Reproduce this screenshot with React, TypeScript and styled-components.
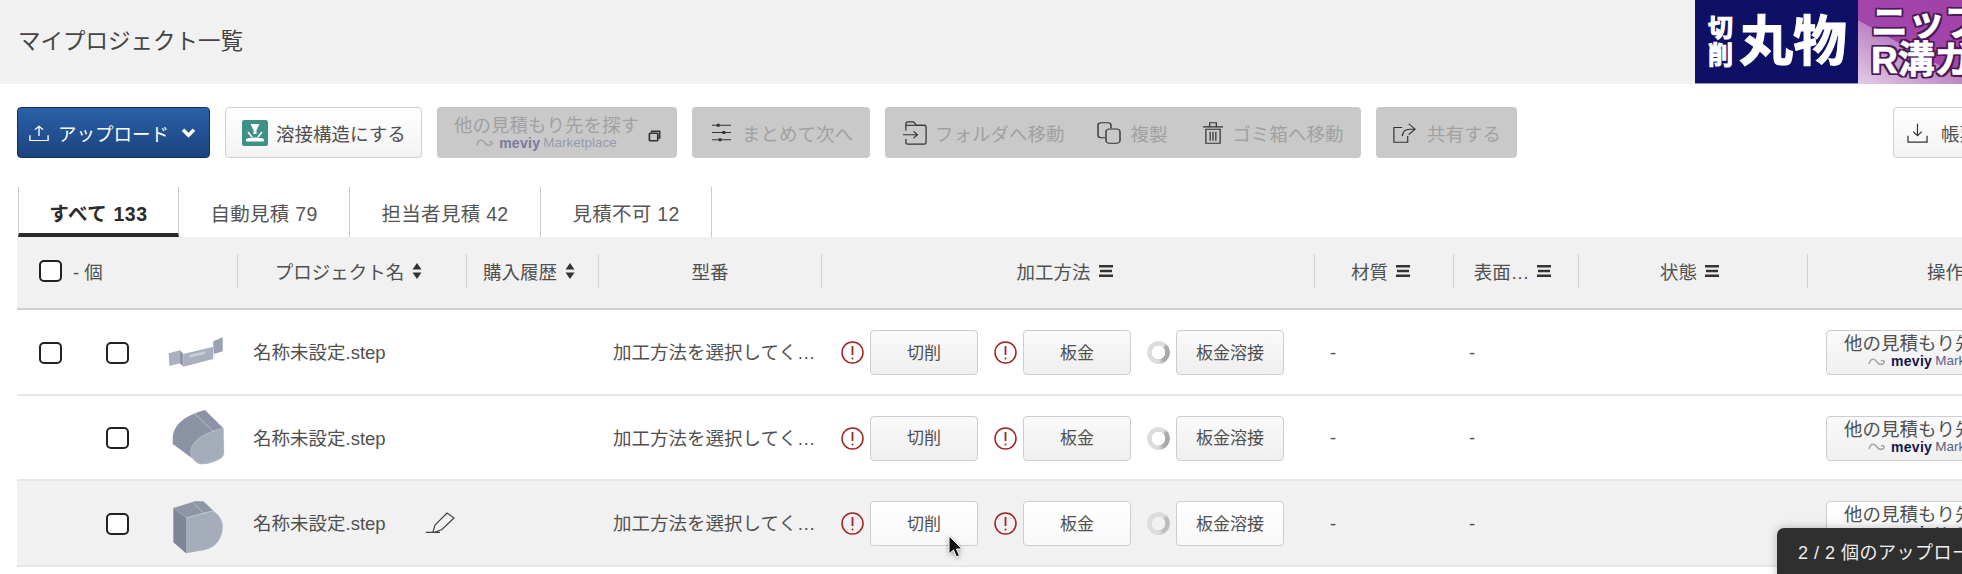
import * as React from 'react';
import styled, { createGlobalStyle } from 'styled-components';

const GlobalStyle = createGlobalStyle`
    html, body {
        margin: 0;
        padding: 0;
        background: #fff;
    }
    body {
        font-family: "Liberation Sans", "Noto Sans CJK JP", sans-serif;
        font-size: 18.5px;
        color: #505050;
    }
`;

const Page = styled.div`
    position: relative;
    width: 1962px;
    height: 574px;
    overflow: hidden;
`;

const Header = styled.header`
    display: flex;
    align-items: center;
    height: 84px;
    padding-left: 18px;
    background: #f1f1f2;
`;

const Title = styled.h1`
    margin: 0 0 6px;
    font-size: 22.5px;
    font-weight: 400;
    color: #444;
`;

const Banner = styled.div`
    display: flex;
    width: 267px;
    height: 84px;
    margin-left: auto;
    overflow: hidden;
    font-weight: 700;
    color: #fff;
`;

const BannerNavy = styled.div`
    display: flex;
    align-items: center;
    gap: 5px;
    flex: 0 0 163px;
    padding-left: 13px;
    box-sizing: border-box;
    background: #0d1064;
    border-bottom: 1px solid #8f90c8;
    -webkit-text-stroke: 1px #fff;
`;

const BannerSmall = styled.span`
    display: block;
    width: 26px;
    font-size: 25px;
    line-height: 27px;
`;

const BannerLarge = styled.span`
    font-size: 54px;
    line-height: 60px;
    white-space: nowrap;
`;

const BannerPurple = styled.div`
    flex: 1;
    padding: 5px 0 0 13px;
    background: linear-gradient(209deg, #a040a8 0%, #a346aa 58%, #bd83c4 58.5%, #e2cce6 100%);
    font-size: 37px;
    line-height: 37px;
    white-space: nowrap;
    -webkit-text-stroke: 0.6px #fff;
    text-shadow: 2px 0 #4a1a58, -2px 0 #4a1a58, 0 2px #4a1a58, 0 -2px #4a1a58, 2px 2px #4a1a58, -2px 2px #4a1a58,
        2px -2px #4a1a58, -2px -2px #4a1a58;
`;

const Toolbar = styled.div`
    display: flex;
    gap: 15px;
    padding: 23px 0 0 17px;
`;

const Button = styled.button<{ $width: number }>`
    display: flex;
    align-items: center;
    flex: 0 0 ${p => p.$width}px;
    box-sizing: border-box;
    width: ${p => p.$width}px;
    height: 51px;
    padding: 0;
    border: 1px solid #cfcfcf;
    border-radius: 4px;
    background: linear-gradient(#fff, #f3f3f3);
    font: inherit;
    color: #505050;
    white-space: nowrap;
`;

const UploadButton = styled(Button)`
    padding-left: 11px;
    gap: 9px;
    border-color: #14305c;
    background: linear-gradient(#2b60a8, #1b437f);
    color: #fff;
`;

const WeldButton = styled(Button)`
    padding-left: 16px;
    gap: 8px;
`;

const DisabledButton = styled(Button)<{ $left?: number }>`
    padding-left: ${p => p.$left ?? 18}px;
    gap: 11px;
    border: 0;
    background: #c9c9c9;
    color: #a1a1a1;
`;

const GroupItem = styled.span<{ $gap: number; $iconGap: number }>`
    display: flex;
    align-items: center;
    gap: ${p => p.$iconGap}px;
    margin-right: ${p => p.$gap}px;
`;

const ExportButton = styled(Button)`
    margin-left: 361px;
    padding-left: 13px;
    gap: 13px;
`;

const SearchStack = styled.span`
    display: flex;
    flex-direction: column;
    align-items: center;
    line-height: 20px;
`;

const MarketLine = styled.span<{ $disabled?: boolean }>`
    display: flex;
    align-items: center;
    gap: 3px;
    font-size: 13.5px;
    line-height: 14px;
    color: ${p => (p.$disabled ? '#979bae' : '#5b6285')};

    b {
        font-weight: 700;
        font-size: 14px;
        letter-spacing: 0.3px;
        color: ${p => (p.$disabled ? '#7a7a9c' : '#14164a')};
    }
`;

const Tabs = styled.div`
    display: flex;
    height: 50px;
    margin: 29px 0 0 18px;
`;

const Tab = styled.div<{ $active?: boolean; $width: number }>`
    display: flex;
    align-items: center;
    justify-content: center;
    box-sizing: border-box;
    width: ${p => p.$width}px;
    border-right: 1px solid #ccc;
    border-left: ${p => (p.$active ? '1px solid #ccc' : '0')};
    border-bottom: ${p => (p.$active ? '4px solid #2b2b2b' : '0')};
    padding-top: ${p => (p.$active ? '4px' : '0')};
    font-size: 19.5px;
    letter-spacing: ${p => (p.$active ? '0.6px' : '0.3px')};
    font-weight: ${p => (p.$active ? 700 : 400)};
    color: ${p => (p.$active ? '#2b2b2b' : '#555')};
`;

const columns = '221px 229px 132px 223px 493px 139px 125px 229px 275px';

const HeadRow = styled.div`
    display: grid;
    grid-template-columns: ${columns};
    align-items: center;
    height: 73px;
    padding-bottom: 3px;
    margin-left: 17px;
    background: #f1f1f1;
    border-bottom: 2px solid #d0d0d0;
    box-sizing: border-box;
`;

const HeadCell = styled.div<{ $last?: boolean }>`
    display: flex;
    align-items: center;
    justify-content: center;
    gap: 8px;
    box-sizing: border-box;
    height: 34px;
    border-right: ${p => (p.$last ? '0' : '1px solid #d2d2d2')};
    white-space: nowrap;
    color: #505050;

    &:has(svg) {
        padding-right: 7px;
    }
`;

const SelectHead = styled(HeadCell)`
    justify-content: flex-start;
    gap: 11px;
    padding-left: 22px;
`;

const Row = styled.div<{ $hover?: boolean }>`
    display: grid;
    grid-template-columns: ${columns};
    align-items: center;
    box-sizing: border-box;
    height: 85.6px;
    padding-top: 2px;
    margin-left: 17px;
    background: ${p => (p.$hover ? '#f1f1f1' : '#fff')};
    border-bottom: 2px solid #e6e6e6;
`;

const SelectCell = styled.div`
    display: grid;
    grid-template-columns: 67px 58px 1fr;
    align-items: center;
    padding-left: 22px;
`;

const Check = styled.span`
    display: block;
    box-sizing: border-box;
    width: 23px;
    height: 22px;
    border: 2px solid #222;
    border-radius: 5px;
    background: #fff;
`;

const NameCell = styled.div`
    display: flex;
    align-items: center;
    gap: 40px;
    padding-left: 15px;
    margin-bottom: 3px;
`;

const ModelCell = styled.div`
    width: 205px;
    margin: 0 0 3px 14px;
    overflow: hidden;
    text-overflow: ellipsis;
    white-space: nowrap;
`;

const ProcessCell = styled.div`
    display: flex;
    align-items: center;
    padding-left: 19px;
`;

const ProcessItem = styled.div`
    display: flex;
    align-items: center;
    gap: 6px;
    margin-right: 16px;
`;

const ProcessButton = styled.button<{ $hover?: boolean }>`
    box-sizing: border-box;
    width: 108px;
    height: 45px;
    padding: 0 0 3px;
    border: 1px solid #cdcdcd;
    border-radius: 4px;
    background: ${p => (p.$hover ? 'linear-gradient(#fff, #f8f8f8)' : 'linear-gradient(#fafafa, #efefef)')};
    font: inherit;
    font-size: 17px;
    color: #505050;
`;

const Spinner = styled.span<{ $soft?: boolean }>`
    display: block;
    box-sizing: border-box;
    width: 23px;
    height: 23px;
    border-radius: 50%;
    background: conic-gradient(#dcdcdc 0 10%, ${p => (p.$soft ? '#bdbdbd' : '#a9a9a9')} 15% 40%, #dcdcdc 50% 100%);
    -webkit-mask: radial-gradient(circle, transparent 6.5px, #000 7px);
    mask: radial-gradient(circle, transparent 6.5px, #000 7px);
`;

const DashCell = styled.div`
    padding-left: 15px;
`;

const OpsCell = styled.div`
    padding-left: 18px;
`;

const MarketButton = styled.button<{ $hover?: boolean }>`
    display: flex;
    flex-direction: column;
    align-items: flex-start;
    box-sizing: border-box;
    width: 240px;
    height: 45px;
    padding: 2px 0 0 17px;
    border: 1px solid #cdcdcd;
    border-radius: 4px;
    background: ${p => (p.$hover ? 'linear-gradient(#fff, #f8f8f8)' : 'linear-gradient(#fafafa, #f0f0f0)')};
    font: inherit;
    line-height: 21px;
    color: #505050;
    white-space: nowrap;
`;

const MarketSub = styled(MarketLine)`
    margin-left: 24px;
`;

const Toast = styled.div`
    position: absolute;
    left: 1777px;
    top: 528px;
    width: 300px;
    height: 70px;
    padding: 10px 0 0 21px;
    border-radius: 7px;
    background: #2f2f2f;
    box-shadow: 0 0 10px rgba(0, 0, 0, 0.25);
    font-size: 18px;
    color: #eee;
    letter-spacing: 0.5px;
    white-space: nowrap;
`;

const Cursor = styled.svg`
    position: absolute;
    left: 948px;
    top: 535px;
    filter: drop-shadow(0 1px 2px rgba(0, 0, 0, 0.35));
`;

const UploadIcon = () => (
    <svg width="20" height="18" viewBox="0 0 22 24" preserveAspectRatio="none" fill="none" stroke="#fff" strokeWidth="1.500">
        <path d="M11 16V3M6.500 7.500 11 3l4.500 4.500M1 15v7h20v-7" />
    </svg>
);

const ChevronIcon = () => (
    <svg width="17" height="11" viewBox="0 0 16 12" fill="none" stroke="#fff" strokeWidth="3.800" style={{ marginLeft: 2 }}>
        <path d="M2 3l6 6 6-6" />
    </svg>
);

const WeldIcon = () => (
    <svg width="26" height="26" viewBox="0 0 26 26">
        <rect width="26" height="26" rx="2.500" fill="#3f9086" />
        <path d="M8.500 4h9l-3 6v4h-3v-4z" fill="#fff" />
        <path d="M6 12l4 5M20 12l-4 5" stroke="#fff" strokeWidth="1.500" />
        <path d="M4 19c5-2 13-2 18 0v2.500H4z" fill="#fff" />
    </svg>
);

const ExternalIcon = () => (
    <svg width="13" height="12" viewBox="0 0 14 15" preserveAspectRatio="none" fill="none" stroke="#333" strokeWidth="1.800" style={{ marginLeft: -2, marginTop: 6 }}>
        <path d="M4 3V1.500h8.500V10H11" />
        <rect x="1.500" y="4" width="9" height="9.500" rx="1" />
    </svg>
);

const SlidersIcon = () => (
    <svg width="19" height="21" viewBox="0 0 20 26" preserveAspectRatio="none" fill="none" stroke="#333" strokeWidth="1.200">
        <path d="M0 4h20M0 13h20M0 22h20" />
        <path d="M5 4h3M11 13h3M7 22h3" strokeWidth="3.500" />
    </svg>
);

const FolderIcon = () => (
    <svg width="25" height="24" viewBox="0 0 26 28" preserveAspectRatio="none" fill="none" stroke="#333" strokeWidth="1.300">
        <path d="M3 11V3.500Q3 1 5 1h6l3 4h8q2 0 2 2.500v17q0 2.500-2 2.500H5q-2 0-2-2.500V21" />
        <path d="M3 5h21" />
        <path d="M0 16h15M11 12l4 4-4 4" />
    </svg>
);

const CopyIcon = () => (
    <svg width="24" height="22" viewBox="0 0 24 28" preserveAspectRatio="none" fill="none" stroke="#333" strokeWidth="1.400">
        <path d="M8 20H4q-3 0-3-3V4q0-3 3-3h7q3 0 3 3v4" />
        <rect x="9" y="9" width="14" height="18" rx="3.500" />
    </svg>
);

const TrashIcon = () => (
    <svg width="20" height="22" viewBox="0 0 21 27" preserveAspectRatio="none" fill="none" stroke="#333" strokeWidth="1.300">
        <path d="M0 6h21M7 6V1h7v5M3 9h15v17H3zM7.500 12v11M10.500 12v11M13.500 12v11" />
    </svg>
);

const ShareIcon = () => (
    <svg width="23" height="20" viewBox="0 0 25 26" preserveAspectRatio="none" fill="none" stroke="#333" strokeWidth="1.300">
        <path d="M10 6H1v19h15v-8" />
        <path d="M17 1l7 7-7 7M24 8h-6q-7 0-8 9" />
    </svg>
);

const DownloadIcon = () => (
    <svg width="21" height="22" viewBox="0 0 22 24" preserveAspectRatio="none" fill="none" stroke="#333" strokeWidth="1.300">
        <path d="M11 2v13M6.500 10.500 11 15l4.500-4.500M1 15v7h20v-7" />
    </svg>
);

const SortIcon = () => (
    <svg width="10" height="16" viewBox="0 0 10 16" fill="#333">
        <path d="M5 0l4.500 6.500h-9zM5 16 .5 9.500h9z" />
    </svg>
);

const FilterIcon = () => (
    <svg width="14" height="12" viewBox="0 0 14 12" fill="#333">
        <path d="M0 0h14v2.400H0zM1 4.800h12v2.400H1zM0 9.600h14V12H0z" />
    </svg>
);

const AlertIcon = () => (
    <svg width="23" height="23" viewBox="0 0 23 23" fill="none" stroke="#a32222" strokeWidth="1.500">
        <circle cx="11.500" cy="11.500" r="10.500" />
        <path d="M11.500 5v9" strokeWidth="1.800" />
        <circle cx="11.500" cy="17.500" r="1" fill="#a32222" stroke="none" />
    </svg>
);

const PencilIcon = () => (
    <svg width="29" height="21" viewBox="0 0 29 21" fill="none" stroke="#444" strokeWidth="1.200">
        <path d="M0 20.400h14M7 20l2-7L21 1l7 5-12 11.500-7 2.500" />
    </svg>
);

const MeviyMark = () => (
    <svg width="20" height="9" viewBox="0 0 20 9" fill="none" stroke="#a5a5a5" strokeWidth="1.600">
        <path d="M1 7c2-7 6-5 8-2s5 3 7 1c1-2-1-3-3-2" />
    </svg>
);

const ThumbSvg = styled.svg`
    display: block;
`;

const Thumb = ({ index }: { index: number }) => {
    const top = [-17, 240, 496][index];
    return (
        <ThumbSvg width="64" height="76" viewBox={`42 ${top} 192 228`}>
            {index === 0 && (
                <g>
                    <path d="M56 98l34-9v39l-32 8z" fill="#aab0bd" />
                    <path d="M90 89l10 11v38l-10-10z" fill="#8f96a6" />
                    <path d="M100 100l90-22v37l-90 23z" fill="#a9afbc" />
                    <path d="M190 78l2 22 26-8V50l-28 12z" fill="#9aa1b0" />
                    <path d="M118 103l48-11v8l-48 11z" fill="#c9cdd5" />
                </g>
            )}
            {index === 1 && (
                <g>
                    <path d="M68 355C70 310 110 285 165 270l55 55 2 75c-12 25-52 35-72 32L68 372z" fill="#8b93a4" />
                    <path d="M220 325c-50 10-95 35-98 70 0 17 13 33 28 37 30-2 72-12 72-32z" fill="#a5acba" stroke="#d3d6dc" strokeWidth="1.500" />
                    <path d="M135 282l55 52" stroke="#cdd1d8" strokeWidth="2" />
                </g>
            )}
            {index === 2 && (
                <g>
                    <path d="M70 562l65-20h25l30 28-82 22z" fill="#8d95a6" />
                    <path d="M70 562l38 30v106l-38-33z" fill="#7e8697" />
                    <path d="M108 592l82-22c20 15 28 30 28 50 0 30-18 60-53 68l-57 10z" fill="#a5acba" />
                    <path d="M130 547l35 33M108 592l82-22" stroke="#cdd1d8" strokeWidth="2" />
                </g>
            )}
        </ThumbSvg>
    );
};

const rows = [0, 1, 2];

export default function App() {
    return (
        <Page>
            <GlobalStyle />
            <Header>
                <Title>マイプロジェクト一覧</Title>
                <Banner>
                    <BannerNavy>
                        <BannerSmall>切削</BannerSmall>
                        <BannerLarge>丸物</BannerLarge>
                    </BannerNavy>
                    <BannerPurple>
                        ニップ
                        <br />
                        R溝ガ
                    </BannerPurple>
                </Banner>
            </Header>

            <Toolbar>
                <UploadButton $width={193}>
                    <UploadIcon />
                    アップロード
                    <ChevronIcon />
                </UploadButton>
                <WeldButton $width={197}>
                    <WeldIcon />
                    溶接構造にする
                </WeldButton>
                <DisabledButton $width={240} $left={17}>
                    <SearchStack>
                        他の見積もり先を探す
                        <MarketLine $disabled>
                            <MeviyMark />
                            <b>meviy</b> Marketplace
                        </MarketLine>
                    </SearchStack>
                    <ExternalIcon />
                </DisabledButton>
                <DisabledButton $width={178} $left={20}>
                    <SlidersIcon />
                    まとめて次へ
                </DisabledButton>
                <DisabledButton $width={476}>
                    <GroupItem $gap={21} $iconGap={7}>
                        <FolderIcon />
                        フォルダへ移動
                    </GroupItem>
                    <GroupItem $gap={24} $iconGap={10}>
                        <CopyIcon />
                        複製
                    </GroupItem>
                    <GroupItem $gap={0} $iconGap={10}>
                        <TrashIcon />
                        ゴミ箱へ移動
                    </GroupItem>
                </DisabledButton>
                <DisabledButton $width={141} $left={17}>
                    <ShareIcon />
                    共有する
                </DisabledButton>
                <ExportButton $width={200}>
                    <DownloadIcon />
                    帳票ダウンロード
                </ExportButton>
            </Toolbar>

            <Tabs>
                <Tab $active $width={161}>すべて 133</Tab>
                <Tab $width={171}>自動見積 79</Tab>
                <Tab $width={191}>担当者見積 42</Tab>
                <Tab $width={171}>見積不可 12</Tab>
            </Tabs>

            <HeadRow>
                <SelectHead>
                    <Check />- 個
                </SelectHead>
                <HeadCell>プロジェクト名 <SortIcon /></HeadCell>
                <HeadCell>購入履歴 <SortIcon /></HeadCell>
                <HeadCell>型番</HeadCell>
                <HeadCell>加工方法 <FilterIcon /></HeadCell>
                <HeadCell>材質 <FilterIcon /></HeadCell>
                <HeadCell>表面… <FilterIcon /></HeadCell>
                <HeadCell>状態 <FilterIcon /></HeadCell>
                <HeadCell $last>操作</HeadCell>
            </HeadRow>

            {rows.map(i => {
                const hover = i === 2;
                return (
                    <Row key={i} $hover={hover}>
                        <SelectCell>
                            {i === 0 ? <Check /> : <span />}
                            <Check />
                            <Thumb index={i} />
                        </SelectCell>
                        <NameCell>
                            名称未設定.step
                            {hover && <PencilIcon />}
                        </NameCell>
                        <span />
                        <ModelCell>加工方法を選択してください</ModelCell>
                        <ProcessCell>
                            <ProcessItem>
                                <AlertIcon />
                                <ProcessButton $hover={hover}>切削</ProcessButton>
                            </ProcessItem>
                            <ProcessItem>
                                <AlertIcon />
                                <ProcessButton $hover={hover}>板金</ProcessButton>
                            </ProcessItem>
                            <ProcessItem>
                                <Spinner $soft={hover} />
                                <ProcessButton $hover={hover}>板金溶接</ProcessButton>
                            </ProcessItem>
                        </ProcessCell>
                        <DashCell>-</DashCell>
                        <DashCell>-</DashCell>
                        <span />
                        <OpsCell>
                            <MarketButton $hover={hover}>
                                他の見積もり先を探す
                                <MarketSub>
                                    <MeviyMark />
                                    <b>meviy</b> Marketplace
                                </MarketSub>
                            </MarketButton>
                        </OpsCell>
                    </Row>
                );
            })}

            <Cursor width="16" height="24" viewBox="0 0 16 24">
                <path d="M1 1v18l4.500-4 3 7 3-1.300-3-6.700H14z" fill="#111" stroke="#fff" strokeWidth="1" />
            </Cursor>
            <Toast>2 / 2 個のアップロード</Toast>
        </Page>
    );
}
